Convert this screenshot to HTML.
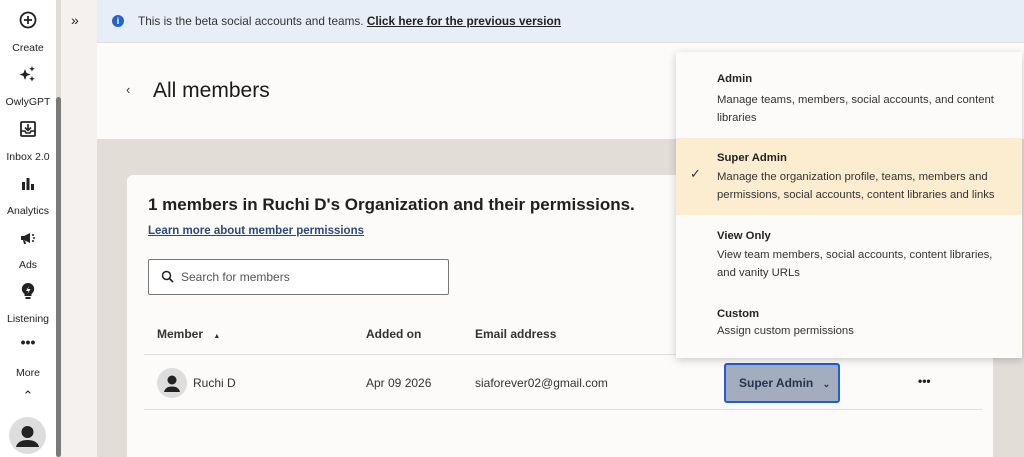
<!DOCTYPE html><html><head><style>
*{margin:0;padding:0;box-sizing:border-box}
html,body{width:1024px;height:457px;overflow:hidden}
body{position:relative;background:#e2ddd7;font-family:"Liberation Sans",sans-serif;color:#1f1f1f}
.a{position:absolute}
.side{left:0;top:0;width:56px;height:457px;background:#fff}
.lbl{position:absolute;width:56px;text-align:center;font-size:10.5px;color:#222}
.ic{position:absolute;left:18px;width:20px;height:20px}
.t{font-size:12px;color:#333;white-space:nowrap}
.d{font-size:11.3px}
</style></head><body>
<div class="a side">
<svg class="ic" style="top:10px" viewBox="0 0 20 20"><circle cx="10" cy="10" r="7.5" fill="none" stroke="#222" stroke-width="1.8"/><path d="M10 6v8M6 10h8" stroke="#222" stroke-width="1.8"/></svg>
<div class="lbl" style="top:42px">Create</div>
<svg class="ic" style="top:64px" viewBox="0 0 20 20"><path d="M7 5l1.5 4 4 1.5-4 1.5L7 16l-1.5-4L1.5 10.5l4-1.5z M14 2l.8 2 2 .8-2 .8L14 7.6l-.8-2-2-.8 2-.8z M14 12l.8 2 2 .8-2 .8-.8 2-.8-2-2-.8 2-.8z" fill="#222"/></svg>
<div class="lbl" style="top:96px">OwlyGPT</div>
<svg class="ic" style="top:119px" viewBox="0 0 20 20"><rect x="3" y="3" width="14" height="14" rx="1" fill="none" stroke="#222" stroke-width="1.8"/><path d="M10 5v6M7 8.5l3 3 3-3M3 12h4l1 2h4l1-2h4" stroke="#222" stroke-width="1.6" fill="none"/></svg>
<div class="lbl" style="top:151px">Inbox 2.0</div>
<svg class="ic" style="top:174px" viewBox="0 0 20 20"><rect x="4" y="8" width="3" height="8" fill="#222"/><rect x="8.5" y="4" width="3" height="12" fill="#222"/><rect x="13" y="10" width="3" height="6" fill="#222"/></svg>
<div class="lbl" style="top:205px">Analytics</div>
<svg class="ic" style="top:228px" viewBox="0 0 20 20"><path d="M3 8h3l6-3v10l-6-3H3z M5 12l1 4h2l-1-4" fill="#222"/><circle cx="15" cy="7" r="1" fill="#222"/><circle cx="16" cy="10" r="1" fill="#222"/><circle cx="15" cy="13" r="1" fill="#222"/></svg>
<div class="lbl" style="top:259px">Ads</div>
<svg class="ic" style="top:281px" viewBox="0 0 20 20"><path d="M10 2a6 6 0 0 0-3.5 11v2h7v-2A6 6 0 0 0 10 2z M7.5 16h5v2h-5z" fill="#222"/><path d="M11 5l-3 5h2.5l-1 3 3-5h-2.5z" fill="#fff"/></svg>
<div class="lbl" style="top:313px">Listening</div>
<div class="lbl" style="top:334px;font-size:14px;font-weight:bold">•••</div>
<div class="lbl" style="top:367px">More</div>
<div class="lbl" style="top:388px;font-size:13px">⌃</div>
<div class="a" style="left:9px;top:417px;width:37px;height:37px;border-radius:50%;background:#ddd;overflow:hidden"><svg width="37" height="37" viewBox="0 0 37 37"><circle cx="18.5" cy="15" r="6" fill="#222"/><path d="M7 30c1-5 6-7 11.5-7S29 25 30 30z" fill="#222"/></svg></div>
</div>
<div class="a" style="left:56px;top:97px;width:5px;height:360px;background:#7a7a7a;border-radius:3px"></div>
<div class="a" style="left:61px;top:0;width:36px;height:457px;background:#f4f1ee"></div>
<div class="a" style="left:71px;top:12px;font-size:14px;color:#223">»</div>
<div class="a" style="left:97px;top:0;width:927px;height:42px;background:#e8eef8;border-radius:0 0 0 3px"></div>
<div class="a" style="left:112px;top:15px;width:12px;height:12px;border-radius:50%;background:#2563c9;color:#fff;font-size:9px;text-align:center;line-height:12px;font-weight:bold">i</div>
<div class="a t" style="left:138px;top:14px;font-size:11.8px">This is the beta social accounts and teams. <b style="text-decoration:underline;color:#222">Click here for the previous version</b></div>
<div class="a" style="left:97px;top:43px;width:927px;height:96px;background:#fcfbf9"></div>
<div class="a" style="left:126px;top:82px;font-size:13px;color:#333">‹</div>
<div class="a" style="left:153px;top:79px;font-size:21px;color:#1a1a1a">All members</div>
<div class="a" style="left:127px;top:175px;width:866px;height:290px;background:#fcfbf9;border-radius:6px"></div>
<div class="a" style="left:148px;top:195px;font-size:17px;font-weight:bold;color:#1f1f1f;white-space:nowrap">1 members in Ruchi D's Organization and their permissions.</div>
<div class="a" style="left:148px;top:225px;font-size:11.5px;font-weight:bold;color:#2b4a7a;text-decoration:underline">Learn more about member permissions</div>
<div class="a" style="left:148px;top:259px;width:301px;height:36px;border:1px solid #777;border-radius:2px;background:#fff"></div>
<svg class="a" style="left:161px;top:270px" width="13" height="13" viewBox="0 0 13 13"><circle cx="5.5" cy="5.5" r="4" fill="none" stroke="#222" stroke-width="1.5"/><path d="M8.5 8.5l3.5 3.5" stroke="#222" stroke-width="1.6"/></svg>
<div class="a t" style="left:181px;top:270px;color:#555">Search for members</div>
<div class="a t" style="left:157px;top:327px;font-weight:bold;color:#333">Member <span style="font-size:7px;margin-left:7px">▲</span></div>
<div class="a t" style="left:366px;top:327px;font-weight:bold;color:#333">Added on</div>
<div class="a t" style="left:475px;top:327px;font-weight:bold;color:#333">Email address</div>
<div class="a" style="left:144px;top:354px;width:838px;height:1px;background:#ddd"></div>
<div class="a" style="left:144px;top:409px;width:838px;height:1px;background:#ddd"></div>
<div class="a" style="left:157px;top:368px;width:30px;height:30px;border-radius:50%;background:#ddd"><svg width="30" height="30" viewBox="0 0 30 30"><circle cx="15" cy="12" r="4.5" fill="#222"/><path d="M7 24c1-4 4-5.5 8-5.5s7 1.5 8 5.5z" fill="#222"/></svg></div>
<div class="a t" style="left:193px;top:376px">Ruchi D</div>
<div class="a t" style="left:366px;top:376px">Apr 09 2026</div>
<div class="a t" style="left:475px;top:376px">siaforever02@gmail.com</div>
<div class="a" style="left:724px;top:363px;width:116px;height:40px;background:#a3adbf;border:2px solid #1d5fd6;border-radius:3px;font-size:12px;font-weight:bold;color:#243350;line-height:36px;padding-left:13px">Super Admin <span style="font-size:9px;margin-left:6px">⌄</span></div>
<div class="a" style="left:918px;top:374px;font-size:12px;font-weight:bold">•••</div>
<div class="a" style="left:676px;top:52px;width:346px;height:306px;background:#fcfbf9;box-shadow:0 2px 8px rgba(0,0,0,.2)"></div>
<div class="a" style="left:676px;top:138px;width:346px;height:77px;background:#fcedd0"></div>
<div class="a t d" style="left:717px;top:73px;font-weight:bold;color:#222">Admin</div>
<div class="a t d" style="left:717px;top:91px;line-height:18px">Manage teams, members, social accounts, and content<br>libraries</div>
<div class="a t d" style="left:717px;top:152px;font-weight:bold;color:#222">Super Admin</div>
<div class="a" style="left:690px;top:166px;font-size:13px;color:#333">✓</div>
<div class="a t d" style="left:717px;top:168px;line-height:18px">Manage the organization profile, teams, members and<br>permissions, social accounts, content libraries and links</div>
<div class="a t d" style="left:717px;top:230px;font-weight:bold;color:#222">View Only</div>
<div class="a t d" style="left:717px;top:246px;line-height:18px">View team members, social accounts, content libraries,<br>and vanity URLs</div>
<div class="a t d" style="left:717px;top:308px;font-weight:bold;color:#222">Custom</div>
<div class="a t d" style="left:717px;top:325px">Assign custom permissions</div>
</body></html>
